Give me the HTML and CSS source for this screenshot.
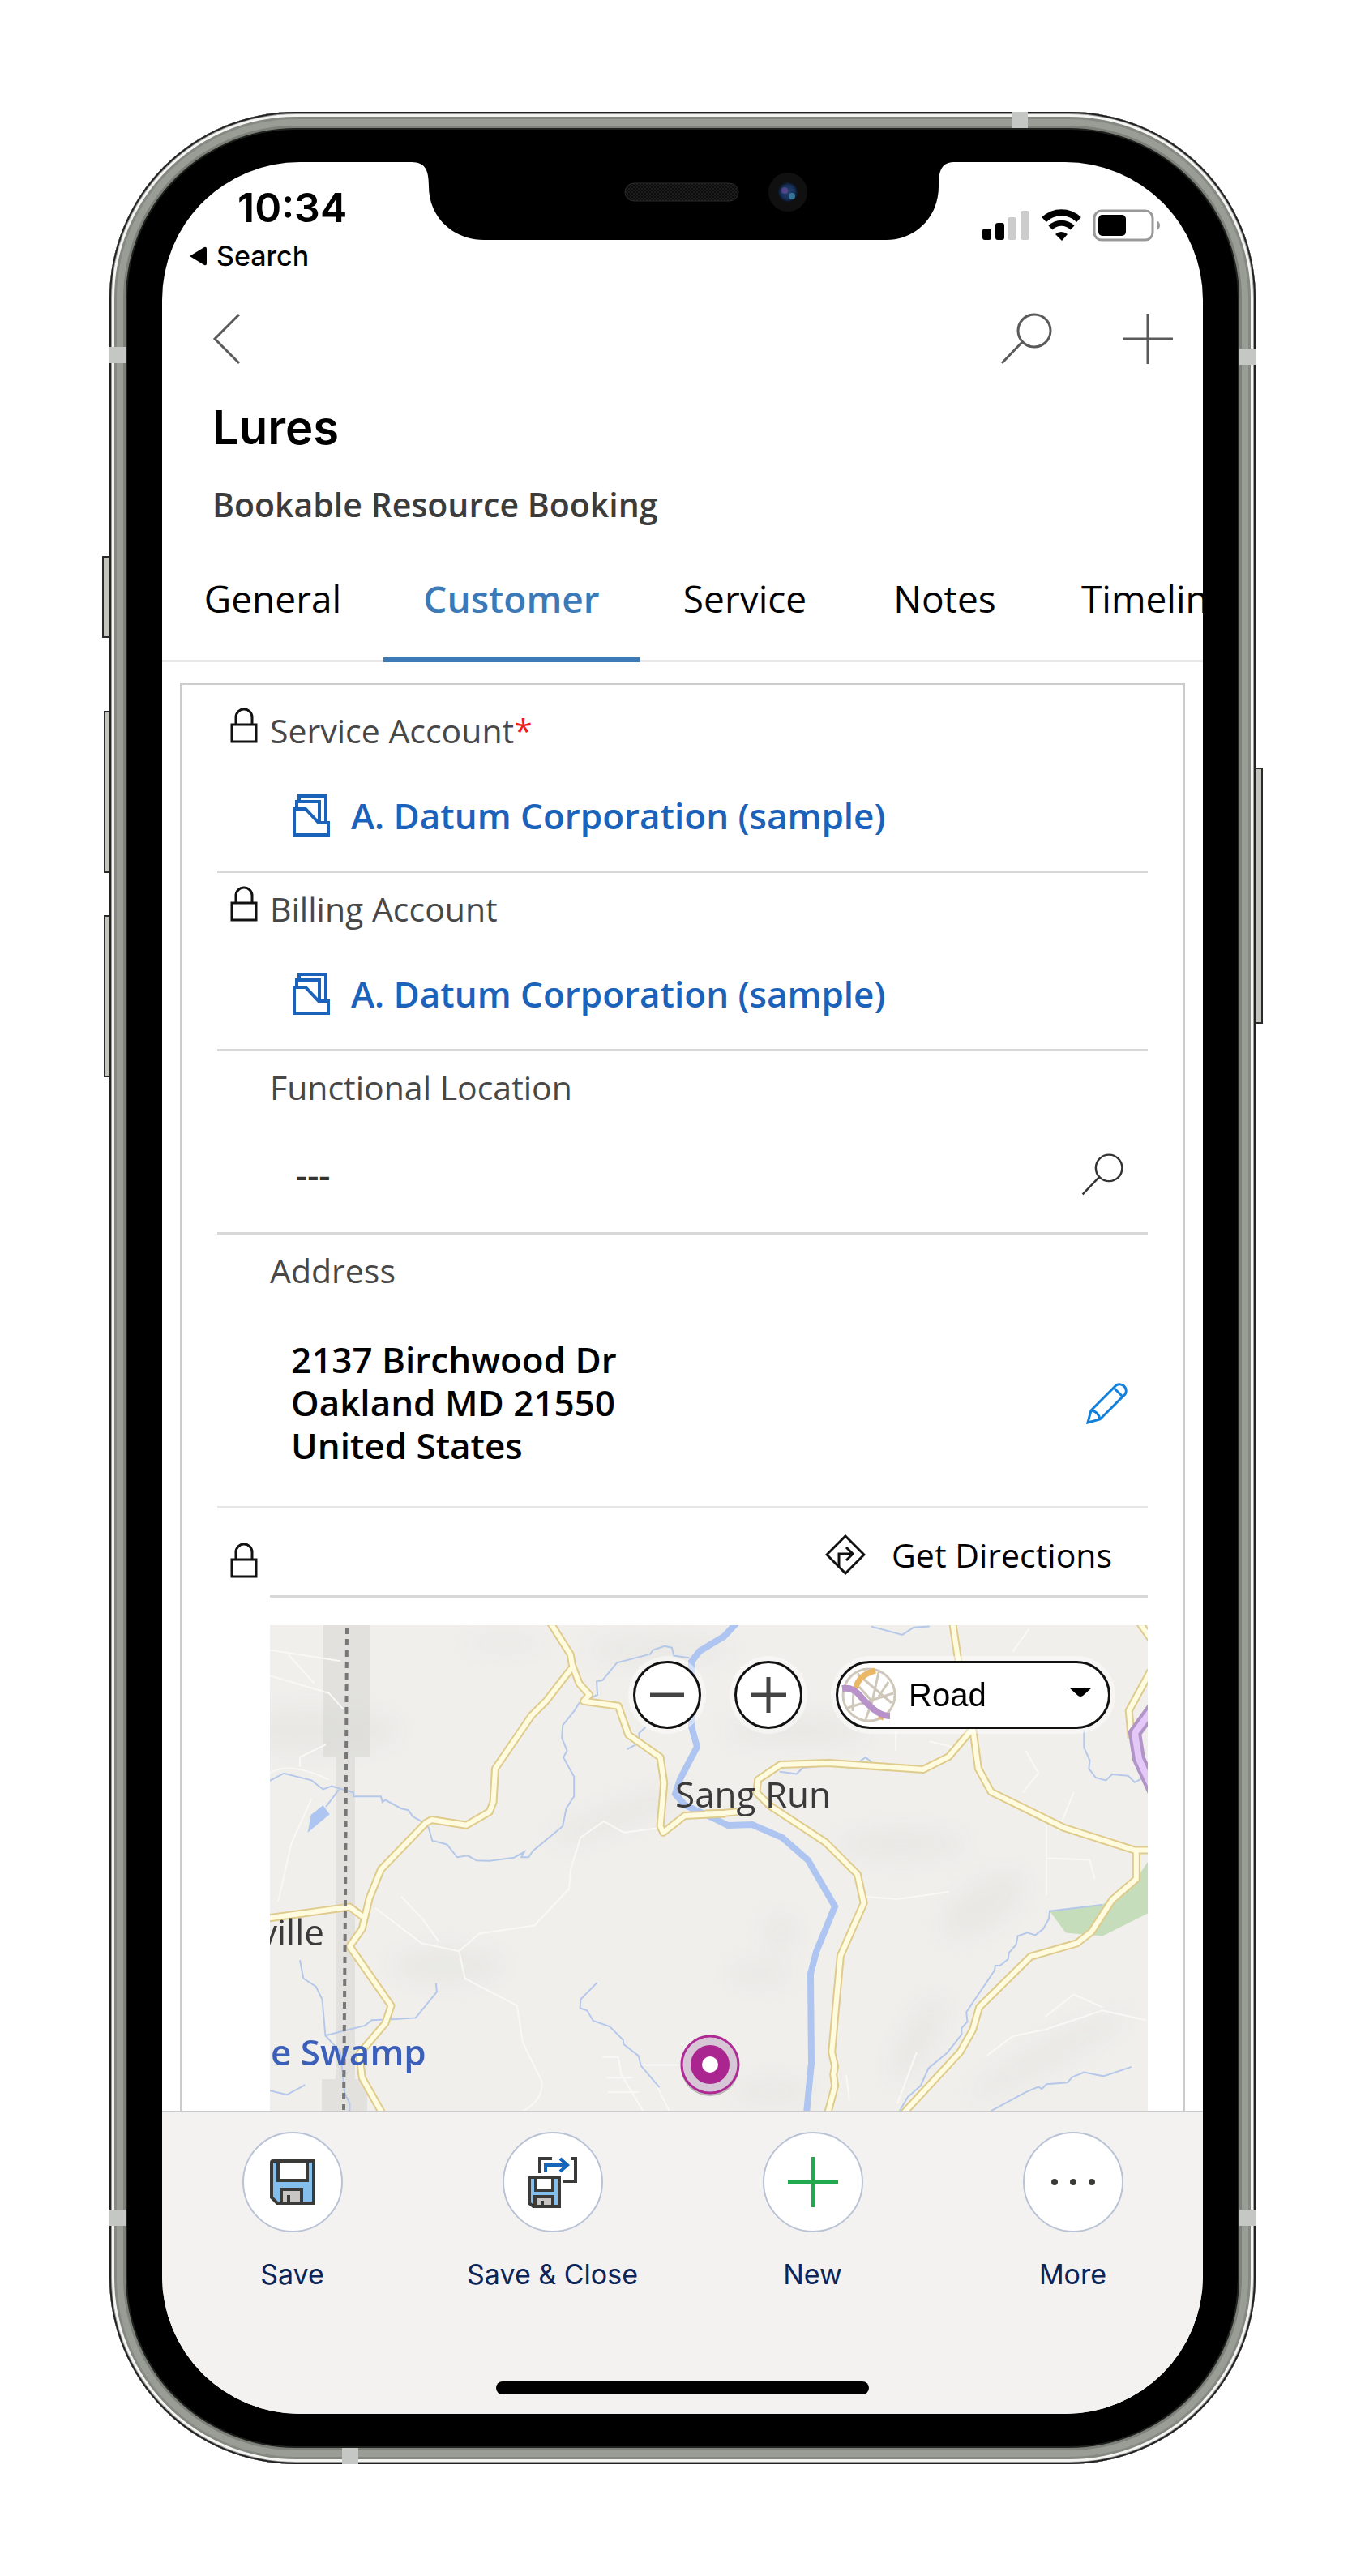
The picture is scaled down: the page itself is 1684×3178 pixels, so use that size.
FILE: index.html
```html
<!DOCTYPE html>
<html lang="en">
<head>
<meta charset="utf-8">
<meta name="viewport" content="width=device-width, initial-scale=1">
<title>Lures - Bookable Resource Booking</title>
<link rel="stylesheet" href="styles.css">
</head>
<body>
<svg class="sprite" aria-hidden="true">
  <symbol id="i-lock" viewBox="0 0 34 44"><path d="M2 21h30v21H2zM7 21V12a10 10 0 0 1 20 0v9" fill="none" stroke="#111" stroke-width="3"/></symbol>
  <symbol id="i-account" viewBox="0 0 46 52"><path d="M2 18h14l16 17h12v15H2zM5 17V9h28v25M8 8V2h33v32" fill="none" stroke="#1b62ba" stroke-width="4"/></symbol>
  <symbol id="i-search" viewBox="0 0 64 64"><path d="M2 62l26-27" fill="none" stroke="currentColor" stroke-width="3"/><circle cx="42" cy="22" r="20" fill="none" stroke="currentColor" stroke-width="3"/></symbol>
</svg>

<main class="stage">
  <div class="phone">
    <span class="key key-mute"></span>
    <span class="key key-up"></span>
    <span class="key key-down"></span>
    <span class="key key-power"></span>
    <span class="band band-top"></span>
    <span class="band band-bottom"></span>
    <span class="band band-lt"></span>
    <span class="band band-lb"></span>
    <span class="band band-rt"></span>
    <span class="band band-rb"></span>

    <svg class="notch" viewBox="0 0 672 100" aria-hidden="true">
      <defs>
        <radialGradient id="lens"><stop offset="0" stop-color="#27406f"/><stop offset=".7" stop-color="#173058"/><stop offset="1" stop-color="#0a1526"/></radialGradient>
        <pattern id="mesh" width="4" height="4" patternUnits="userSpaceOnUse"><rect width="4" height="4" fill="#0c0c0c"/><circle cx="1" cy="1" r="1" fill="#242424"/><circle cx="3" cy="3" r="1" fill="#242424"/></pattern>
      </defs>
      <path d="M0 0V4C16 4 22 11 22 34C22 72 52 100 90 100H587C622 100 651 72 651 34C651 11 656 4 672 4V0Z"/>
      <rect x="264" y="30" width="140" height="22" rx="11" fill="url(#mesh)" stroke="#2a2a2a"/>
      <circle cx="465" cy="41" r="24" fill="#101010"/>
      <circle cx="465" cy="41" r="12" fill="url(#lens)"/>
      <circle cx="461" cy="39" r="4" fill="#6a4a9c" opacity=".7"/>
      <circle cx="470" cy="46" r="4" fill="#3f84a8" opacity=".8"/>
    </svg>

    <div class="screen">
      <div class="status">
        <div class="status-left">
          <time class="clock">10:34</time>
          <a class="return" href="#"><svg width="22" height="24" viewBox="0 0 22 24"><path d="M1 12L19 1Q22 0 22 3V21Q22 24 19 23Z"/></svg>Search</a>
        </div>
        <svg class="status-icons" width="220" height="40" viewBox="0 0 220 40" role="img" aria-label="Signal, Wi-Fi and battery">
          <rect x="0" y="24" width="11" height="14" rx="3"/><rect x="16" y="17" width="11" height="21" rx="3"/>
          <rect x="31" y="10" width="11" height="28" rx="3" fill="#ccc"/><rect x="47" y="2" width="11" height="36" rx="3" fill="#ccc"/>
          <path d="M76 13a31 31 0 0 1 43 0" fill="none" stroke="#000" stroke-width="8"/>
          <path d="M84 23a19 19 0 0 1 27 0" fill="none" stroke="#000" stroke-width="7"/>
          <path d="M90 31q7-6 15 0l-7 8z"/>
          <rect x="138" y="2" width="72" height="36" rx="9" fill="none" stroke="#999" stroke-width="3"/>
          <rect x="143" y="7" width="34" height="26" rx="5"/>
          <path d="M215 14q4 2 4 6t-4 6z" fill="#999"/>
        </svg>
      </div>

      <nav class="bar" aria-label="Page">
        <button class="icon-btn" aria-label="Back"><svg width="36" height="64" viewBox="0 0 36 64"><path d="M33 2L3 32l30 30" fill="none" stroke="currentColor" stroke-width="3"/></svg></button>
        <button class="icon-btn push" aria-label="Search"><svg width="64" height="64"><use href="#i-search"/></svg></button>
        <button class="icon-btn" aria-label="Add"><svg width="64" height="64" viewBox="0 0 64 64"><path d="M32 1v62M1 32h62" stroke="currentColor" stroke-width="3"/></svg></button>
      </nav>

      <header class="heading">
        <h1>Lures</h1>
        <p>Bookable Resource Booking</p>
      </header>

      <div class="tabs" role="tablist">
        <button role="tab">General</button>
        <button role="tab" class="active" aria-selected="true">Customer</button>
        <button role="tab">Service</button>
        <button role="tab">Notes</button>
        <button role="tab">Timeline</button>
      </div>

      <section class="card">
        <div class="field first">
          <svg class="lock"><use href="#i-lock"/></svg>
          <div class="field-body">
            <div class="label">Service Account<span class="req">*</span></div>
            <a class="lookup" href="#"><svg width="46" height="52"><use href="#i-account"/></svg>A. Datum Corporation (sample)</a>
          </div>
        </div>
        <div class="field">
          <svg class="lock"><use href="#i-lock"/></svg>
          <div class="field-body">
            <div class="label">Billing Account</div>
            <a class="lookup" href="#"><svg width="46" height="52"><use href="#i-account"/></svg>A. Datum Corporation (sample)</a>
          </div>
        </div>
        <div class="field">
          <div class="field-body">
            <label class="label" for="location">Functional Location</label>
            <div class="entry">
              <input id="location" type="text" value="---">
              <button class="icon-btn dark" aria-label="Look up location"><svg width="52" height="52"><use href="#i-search"/></svg></button>
            </div>
          </div>
        </div>
        <div class="field soft">
          <div class="field-body">
            <div class="label">Address</div>
            <div class="address">
              <address>2137 Birchwood Dr<br>Oakland MD 21550<br>United States</address>
              <button class="icon-btn" aria-label="Edit address"><svg width="52" height="52" viewBox="0 0 52 52" fill="none" stroke="#1180dd" stroke-width="3"><path d="M2 50L6 35L37 4a8 8 0 0 1 11 11L17 46ZM34 7L45 18M6 35q9 1 11 11"/></svg></button>
            </div>
          </div>
        </div>

        <div class="field map-field">
          <svg class="lock"><use href="#i-lock"/></svg>
          <div class="field-body">
            <div class="directions">
              <button><svg width="50" height="50" viewBox="0 0 50 50" fill="none" stroke="#111" stroke-width="3"><path d="M25 2L48 25L25 48L2 25ZM17 40V24H33M26 16l8 8l-8 8"/></svg>Get Directions</button>
            </div>
            <div class="map">
              <svg class="map-art" viewBox="0 0 1083 599" preserveAspectRatio="xMidYMid slice" role="img" aria-label="Road map around Sang Run">
                <defs>
                  <filter id="soft" x="-50%" y="-50%" width="200%" height="200%"><feGaussianBlur stdDeviation="14"/></filter>
                  <g id="roads">
                    <g transform="translate(-13 -15) scale(.3571 .3954)">
                      <path d="M1005 30L1075 130L1080 160L1105 220L1140 255L1120 275L1240 290L1275 380L1385 450L1398 530L1385 665L1395 685L1470 632L1610 626"/>
                      <path d="M1080 170L990 275L940 320L815 485L808 590L795 620L715 662L595 645L575 655L420 800L380 890L355 985L312 1040L455 1225L435 1280L345 1375L355 1450L430 1570"/>
                      <path d="M30 952L312 917L358 948"/>
                    </g>
                    <g transform="translate(537 -15) scale(.3954)">
                      <path d="M0 626L60 624L100 620"/>
                      <path d="M772 30L790 150L835 360L852 485L892 558L1120 670L1340 740L1390 740"/>
                      <path d="M835 360L760 448L680 488L385 468L235 473L165 520L160 560L200 600L375 715L475 815L495 905L422 1070L395 1370L405 1415L400 1440L405 1475L380 1570"/>
                      <path d="M1345 740V830L1270 895L1205 995L1160 1030L1015 1072L855 1230L835 1300L795 1370L610 1570"/>
                      <path d="M1355 30L1390 80M1390 180L1322 305L1330 390"/>
                    </g>
                  </g>
                  <path id="highway" d="M1095 95L1067 133L1072 165L1095 215"/>
                </defs>
                <rect width="1083" height="599" fill="#f0efec"/>
                <g fill="#dcdcd8" filter="url(#soft)" opacity=".35">
                  <ellipse cx="50" cy="130" rx="110" ry="28"/>
                  <ellipse cx="430" cy="235" rx="90" ry="16" transform="rotate(-20 430 235)"/>
                  <ellipse cx="290" cy="22" rx="50" ry="8"/>
                  <ellipse cx="480" cy="30" rx="90" ry="16"/>
                  <ellipse cx="650" cy="130" rx="90" ry="18"/>
                  <ellipse cx="780" cy="270" rx="80" ry="18"/>
                  <ellipse cx="880" cy="345" rx="60" ry="28" transform="rotate(-35 880 345)"/>
                  <ellipse cx="630" cy="380" rx="20" ry="24"/>
                  <ellipse cx="605" cy="430" rx="40" ry="14"/>
                  <ellipse cx="800" cy="510" rx="20" ry="60" transform="rotate(30 800 510)"/>
                  <ellipse cx="960" cy="530" rx="110" ry="16" transform="rotate(-28 960 530)"/>
                  <ellipse cx="220" cy="420" rx="70" ry="22"/>
                  <ellipse cx="620" cy="575" rx="50" ry="16"/>
                </g>
                <g fill="#d3d3d0" opacity=".5"><path d="M66 0h57v163H66z"/><path d="M81 163h24v397H81z"/><path d="M64 560h56v39H64z"/></g>

                <g fill="none" stroke="#f9f8f5" stroke-width="2" transform="translate(-13 -15) scale(.3571 .3954)">
                  <path class="line" d="M36 115L280 150M36 195L240 250L290 300M100 130L190 220M36 500Q100 460 240 520M140 480V450L230 410M65 900L110 720L180 580"/>
                  <path class="line" d="M1385 670L1260 685L1190 650L1110 700L1075 800L1070 860L950 975L760 1000L690 1055L560 1030L400 920M690 1055L710 1140L890 1225L910 1340L975 1460Q985 1520 900 1560M490 885L560 950L620 1025"/>
                  <path class="line" d="M1185 1385H1240L1250 1440L1330 1560M1200 1450H1290M1205 1495H1310M1310 1410H1460M1370 1470L1420 1560"/>
                </g>
                <g fill="none" stroke="#f9f8f5" stroke-width="2" transform="translate(537 -15) scale(.3954)">
                  <path class="line" d="M505 885L600 893L760 870M1065 660V880M1065 765L1200 770L1215 830M1100 680L1150 560M990 560L1040 500L1000 430M595 370V430M700 400L780 420M960 120L1010 50"/>
                  <path class="line" d="M880 1380L960 1320L1060 1300L1240 1240L1375 1270M1060 1260L1150 1190L1240 1230M600 1530L660 1370M440 1440L450 1520"/>
                </g>

                <g transform="translate(537 -15) scale(.3954)">
                  <path fill="#c6ddbb" d="M1075 930L1240 910L1345 830L1385 770V935L1240 1008L1125 998Z"/>
                </g>
                <g fill="none" stroke="#b5c8ea" stroke-width="2" transform="translate(-13 -15) scale(.3571 .3954)">
                  <path class="line" d="M36 523L85 500L180 522L220 550L250 540L325 560V572H420L425 590L435 583L490 610L515 615L530 635L560 650L585 670L597 710L648 722L683 762L720 757L750 772L795 773L880 763L915 745L905 762H930L945 742L1048 665L1060 610L1087 572V510L1050 450L1063 430L1045 390L1048 350L1088 305L1105 280L1168 255L1165 213L1185 210L1235 155L1350 128L1360 115L1400 103L1425 108L1432 133L1485 140"/>
                  <path class="line" d="M1270 425L1312 405V375L1335 355M275 550L230 605M140 1083L152 1140L195 1165L217 1205L228 1318L365 1287L388 1270L470 1267L540 1263L613 1182L610 1155M228 1318L280 1370L295 1500L312 1530V1570M36 1490L95 1503L158 1472"/>
                  <path class="line" d="M1167 1153L1110 1205L1108 1233L1132 1240L1153 1272L1210 1290L1257 1332L1258 1345L1310 1382L1318 1412L1382 1480"/>
                  <path fill="#adc5f0" stroke="none" d="M167 685L178 630L220 600L243 628Z"/>
                </g>
                <g fill="none" stroke="#b5c8ea" stroke-width="2" transform="translate(537 -15) scale(.3954)">
                  <path class="line" d="M518 42L615 68L650 45L700 42M1182 365V420L1200 460L1197 485L1218 513L1250 522L1270 503L1320 508L1340 528L1365 515M232 495L285 502L305 483L480 465L500 450L520 465"/>
                  <path class="line" d="M1240 910L1075 930L1072 955L1055 985L1030 1005L1005 997L975 1008L970 1035L948 1060L945 1080L920 1100H905L903 1115L815 1245L818 1275L800 1295V1315L755 1372L697 1420L672 1475L632 1510L600 1565"/>
                  <path class="line" d="M880 1560L1000 1495L1040 1478L1050 1485L1065 1470L1130 1465L1145 1448L1182 1433L1243 1445L1330 1416"/>
                </g>
                <g fill="none" stroke="#adc5f0" stroke-width="8">
                  <path d="M576 -3L560 14L530 32L520 45V125L527 150L506 190L500 208L512 222L545 237L565 247L595 246L632 262L664 290L697 347L674 403L667 430L668 540L662 602"/>
                </g>

                <use href="#roads" class="road-edge"/>
                <use href="#roads" class="road-fill"/>
                <use href="#highway" fill="none" stroke="#b294c8" stroke-width="16"/>
                <use href="#highway" fill="none" stroke="#e4c8f8" stroke-width="8"/>
                <path d="M95 3L93 340L91 598" fill="none" stroke="#777" stroke-width="4" stroke-dasharray="8 6"/>

                <g class="place">
                  <text x="500" y="225">Sang Run</text>
                  <text x="67" y="395" text-anchor="end">ville</text>
                  <text class="water" x="1" y="543">e Swamp</text>
                </g>
                <g>
                  <circle cx="543" cy="545" r="36" fill="#888" opacity=".5"/>
                  <circle cx="543" cy="542" r="35" fill="#d6c6d6" stroke="#b02a96" stroke-width="3"/>
                  <circle cx="543" cy="542" r="24" fill="#ab2590"/>
                  <circle cx="543" cy="542" r="10" fill="#fff"/>
                </g>
              </svg>
              <div class="map-controls">
                <button class="zoom" aria-label="Zoom out"><svg width="44" height="44" viewBox="0 0 44 44"><path d="M1 22h42" stroke="#444" stroke-width="5"/></svg></button>
                <button class="zoom" aria-label="Zoom in"><svg width="44" height="44" viewBox="0 0 44 44"><path d="M0 22h44M22 0v44" stroke="#444" stroke-width="5"/></svg></button>
                <div class="style-picker">
                  <svg class="globe" width="68" height="68" viewBox="0 0 68 68" fill="none">
                    <g stroke="#cfc8ba" stroke-width="3"><circle cx="34" cy="34" r="32"/><path d="M20 8L62 44M8 50L64 32M46 6L38 42L22 24M38 42L30 64M15 27L14 54M58 18L46 36"/></g>
                    <path d="M42 4Q20 10 18 26M52 56L48 64" stroke="#e9b765" stroke-width="7"/>
                    <path d="M1 26Q14 24 22 34T40 52T60 60" stroke="#b793c9" stroke-width="8"/>
                  </svg>
                  <select aria-label="Map style"><option>Road</option></select>
                  <svg class="caret" width="28" height="12" viewBox="0 0 28 12"><path d="M0 0h28L17 10q-3 2-6 0z"/></svg>
                </div>
              </div>
            </div>
          </div>
        </div>
      </section>

      <footer class="toolbar">
        <div class="commands">
          <button><span class="disc"><svg width="56" height="56" viewBox="0 0 56 56" stroke="#3a3a38" stroke-width="4"><path d="M2 4q0-2 2-2H54V54H9L2 47Z" fill="#83beec"/><path d="M10 2H46V26H10Z" fill="#fff"/><path d="M14 54V37H39V54Z" fill="#c8c6c4"/><path d="M23 54V44"/></svg></span>Save</button>
          <button><span class="disc"><svg width="62" height="64" viewBox="0 0 62 64" stroke="#3a3a38" stroke-width="4" fill="none"><path d="M15 21V3H30M53 3H59V31H44"/><path d="M22 20V11H48M40 3l9 8l-9 8" stroke="#1565b8"/><path d="M2 28q0-2 2-2H39V62H7L2 58Z" fill="#83beec"/><path d="M10 26H31V42H10Z" fill="#fff"/><path d="M9 62V50H31V62Z" fill="#c8c6c4"/><path d="M18 62V55"/></svg></span>Save &amp; Close</button>
          <button><span class="disc"><svg width="62" height="62" viewBox="0 0 62 62"><path d="M31 0v62M0 31h62" stroke="#22a950" stroke-width="4"/></svg></span>New</button>
          <button><span class="disc"><svg width="58" height="10" viewBox="0 0 58 10" fill="#3a3a38"><circle cx="6" cy="5" r="4"/><circle cx="29" cy="5" r="4"/><circle cx="52" cy="5" r="4"/></svg></span>More</button>
        </div>
        <div class="home"></div>
      </footer>
    </div>
  </div>
</main>
</body>
</html>
```
FILE: styles.css
```css
* { box-sizing: border-box; }

body {
  margin: 0;
  background: #fff;
  color: #000;
  font-family: "Open Sans", "Noto Sans", sans-serif;
}

button, input, select {
  margin: 0;
  padding: 0;
  border: 0;
  background: none;
  color: inherit;
  font: inherit;
}

a { color: inherit; text-decoration: none; }
svg { display: block; flex: none; }
.sprite { position: absolute; width: 0; height: 0; }

/* Device */
.stage { padding: 138px 135px; }

.phone {
  position: relative;
  padding: 62px 65px;
  border-radius: 230px;
  background: #000;
  box-shadow:
    inset 0 0 0 2px #222,
    inset 0 0 0 3px #999,
    inset 0 0 0 6px #f4f4f2,
    inset 0 0 0 9px #858982,
    inset 0 0 0 17px #999d95,
    inset 0 0 0 20px #7d817a,
    inset 0 0 0 22px #1f211e;
}

.key {
  position: absolute;
  left: -7px;
  width: 7px;
  height: 200px;
  border: 2px solid #2a2a2a;
  border-right: 0;
  background: #c3c4bc;
}
.key-mute { left: -9px; width: 9px; top: 548px; height: 101px; }
.key-up { top: 739px; }
.key-down { top: 991px; }
.key-power {
  left: auto;
  right: -9px;
  width: 9px;
  top: 809px;
  height: 316px;
  border-left: 0;
  border-right: 2px solid #2a2a2a;
}

.band { position: absolute; width: 20px; height: 20px; background: #c4c7c3; }
.band-top { top: 0; right: 281px; }
.band-bottom { bottom: 0; left: 287px; }
.band-lt { left: 0; top: 290px; }
.band-lb { left: 0; bottom: 294px; }
.band-rt { right: 0; top: 292px; }
.band-rb { right: 0; bottom: 294px; }

.notch {
  position: absolute;
  z-index: 1;
  top: 58px;
  left: 50%;
  width: 672px;
  height: 100px;
  margin-left: -335px;
}

.screen {
  display: flex;
  flex-direction: column;
  overflow: hidden;
  border-radius: 170px;
  background: #fff;
}

/* Status bar */
.status {
  display: flex;
  justify-content: space-between;
  align-items: flex-start;
  height: 148px;
  padding: 26px 52px 0 33px;
  font-family: Inter, "Liberation Sans", sans-serif;
}
.clock {
  display: block;
  padding-left: 60px;
  font-size: 50px;
  font-weight: 600;
  line-height: 60px;
}
.return {
  display: flex;
  align-items: center;
  gap: 12px;
  margin-top: 8px;
  font-size: 34px;
  font-weight: 500;
  line-height: 44px;
}
.status-icons { margin-top: 32px; }

/* Page header */
.bar {
  display: flex;
  align-items: center;
  gap: 86px;
  height: 140px;
  padding: 0 36px 0 62px;
  color: #5a5a5a;
}
.push { margin-left: auto; }
.dark { color: #333; }

.heading { padding: 0 62px; }
.heading h1 {
  margin: 0;
  font: 600 58px/78px Inter, "Liberation Sans", sans-serif;
}
.heading p {
  margin: 28px 0 0;
  color: #3c3c3c;
  font-size: 41px;
  font-weight: 600;
  line-height: 56px;
}

.tabs {
  display: grid;
  grid-template-columns: 273px 316px 260px 233px 300px;
  height: 167px;
  box-shadow: inset 0 -3px #e8e8e8;
  font-size: 46px;
}
.tabs button {
  padding-top: 14px;
  border-bottom: 6px solid transparent;
}
.tabs .active { border-color: #3b79b7; color: #3b79b7; font-weight: 600; }
.tabs button:last-child { padding-left: 52px; text-align: left; }

/* Form */
.card {
  margin: 25px 22px 0;
  padding: 0 43px;
  border: 3px solid #ccc;
  border-bottom: 0;
}
.field {
  position: relative;
  display: flex;
  padding: 16px 0 0 65px;
  border-bottom: 3px solid #d8d8d8;
}
.first { padding-top: 28px; }
.soft { border-color: #e6e6e6; }
.field-body { flex: 1; min-width: 0; }
.lock {
  width: 34px;
  height: 44px;
  margin: 0 15px 0 -49px;
}
.label {
  display: block;
  color: #484848;
  font-size: 41px;
  line-height: 56px;
}
.req { color: #f21c1c; }

.lookup {
  display: flex;
  align-items: center;
  gap: 26px;
  padding: 47px 0 38px 28px;
  color: #1b62ba;
  font-size: 44px;
  font-weight: 600;
  line-height: 60px;
}

.entry {
  display: flex;
  align-items: center;
  padding: 50px 30px 41px 32px;
}
.entry input {
  flex: 1;
  min-width: 0;
  height: 60px;
  color: #333;
  font-size: 44px;
  font-weight: 600;
}

.address {
  display: flex;
  align-items: center;
  justify-content: space-between;
  padding: 56px 24px 48px 26px;
}
address {
  font-size: 44px;
  font-style: normal;
  font-weight: 600;
  line-height: 53px;
}

.map-field { padding-top: 0; border: 0; }
.map-field .lock { margin-top: 42px; }
.directions {
  display: flex;
  justify-content: flex-end;
  height: 110px;
  padding-right: 44px;
  border-bottom: 3px solid #d8d8d8;
}
.directions button {
  display: flex;
  align-items: center;
  gap: 32px;
  padding-top: 6px;
  font-size: 41px;
}

/* Map */
.map {
  position: relative;
  height: 599px;
  margin-top: 34px;
  overflow: hidden;
}
.map-art { width: 100%; height: 100%; }
.line { vector-effect: non-scaling-stroke; }
.road-edge, .road-fill { fill: none; stroke-linejoin: round; }
.road-edge { stroke: #dfcb8c; stroke-width: 10px; }
.road-fill { stroke: #fffbdf; stroke-width: 6px; }
#roads path { vector-effect: non-scaling-stroke; }
.place { fill: #3a3a3a; font-size: 44px; }
.water { fill: #3c5fba; font-weight: 600; }

.map-controls {
  position: absolute;
  top: 44px;
  right: 46px;
  display: flex;
  gap: 41px;
}
.zoom, .style-picker {
  display: flex;
  align-items: center;
  justify-content: center;
  height: 84px;
  border: 3px solid #111;
  border-radius: 42px;
  background: #fff;
  box-shadow: 0 0 0 6px rgba(255, 255, 255, .45);
}
.zoom { width: 84px; }
.style-picker {
  position: relative;
  width: 339px;
  padding: 0 20px 0 4px;
}
.style-picker select {
  flex: 1;
  padding-left: 15px;
  appearance: none;
  font-family: "Liberation Sans", Arial, sans-serif;
  font-size: 40px;
}
.caret { margin-top: -6px; }

/* Bottom toolbar */
.toolbar {
  position: relative;
  padding-bottom: 24px;
  border-top: 2px solid #c9c9cb;
  background: #f3f2f1;
}
.commands {
  display: grid;
  grid-template-columns: repeat(4, 1fr);
  color: #0b2559;
  font-family: Inter, "Liberation Sans", sans-serif;
  font-size: 34px;
  line-height: 44px;
}
.commands button {
  display: flex;
  flex-direction: column;
  align-items: center;
  gap: 30px;
  padding: 24px 0 110px;
}
.disc {
  display: flex;
  align-items: center;
  justify-content: center;
  width: 124px;
  height: 124px;
  border: 2px solid #b9c3d5;
  border-radius: 50%;
  background: #fff;
}
.home {
  width: 460px;
  height: 16px;
  margin: 0 auto;
  border-radius: 8px;
  background: #000;
}
```
